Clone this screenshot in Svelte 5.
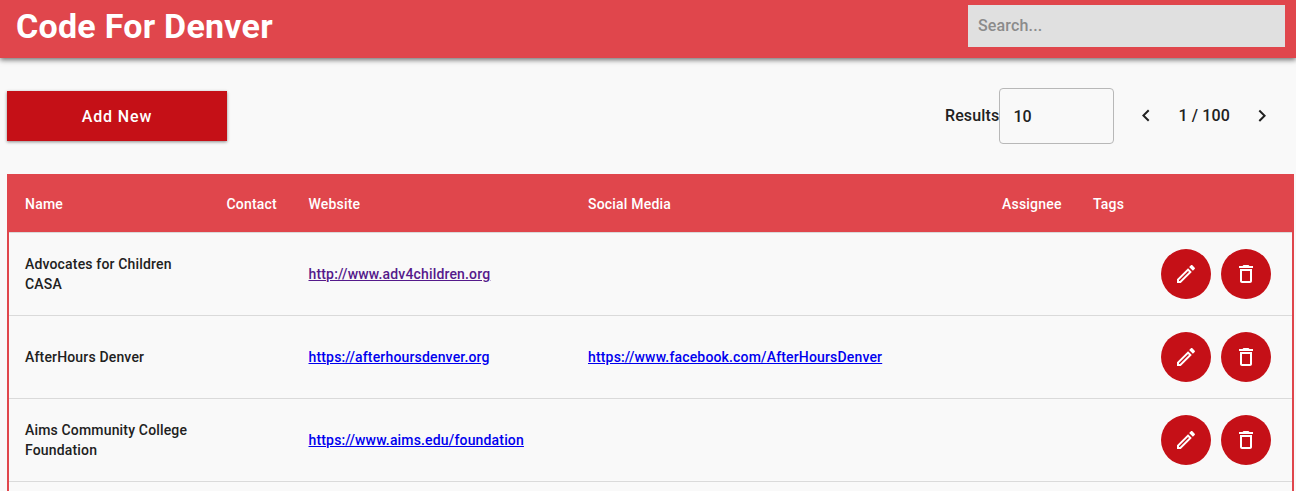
<script>
  const columns = ['Name', 'Contact', 'Website', 'Social Media', 'Assignee', 'Tags', ''];
  const rows = [
    { name: 'Advocates for Children CASA', website: 'http://www.adv4children.org', visited: true },
    { name: 'AfterHours Denver', website: 'https://afterhoursdenver.org', social: 'https://www.facebook.com/AfterHoursDenver' },
    { name: 'Aims Community College Foundation', website: 'https://www.aims.edu/foundation' },
    { name: '', website: '' },
  ];
</script>

<div class="page">
  <header>
    <h1>Code For Denver</h1>
    <input class="search" type="text" placeholder="Search..." aria-label="Search" />
  </header>

  <div class="toolbar">
    <button class="add">Add New</button>
    <div class="pager">
      <span class="label">Results</span>
      <div class="select">10</div>
      <button class="arrow prev" aria-label="Previous page">
        <svg viewBox="0 0 24 24"><path d="M15.41 16.09l-4.58-4.59 4.58-4.59L14 5.5l-6 6 6 6z" /></svg>
      </button>
      <span class="count">1 / 100</span>
      <button class="arrow next" aria-label="Next page">
        <svg viewBox="0 0 24 24"><path d="M8.59 16.34l4.58-4.59-4.58-4.59L10 5.75l6 6-6 6z" /></svg>
      </button>
    </div>
  </div>

  <div class="table">
    <div class="row head">
      {#each columns as column}
        <div class="cell">{column}</div>
      {/each}
    </div>
    {#each rows as row}
      <div class="row">
        <div class="cell">{row.name}</div>
        <div class="cell"></div>
        <div class="cell">
          {#if row.website}<a class:visited={row.visited} href={row.website}>{row.website}</a>{/if}
        </div>
        <div class="cell">
          {#if row.social}<a href={row.social}>{row.social}</a>{/if}
        </div>
        <div class="cell"></div>
        <div class="cell"></div>
        <div class="cell actions">
          <button class="round" aria-label="Edit">
            <svg viewBox="0 0 24 24"><path d="M14.06 9.02l.92.92L5.92 19H5v-.92l9.06-9.06M17.66 3c-.25 0-.51.1-.7.29l-1.83 1.83 3.75 3.75 1.83-1.83c.39-.39.39-1.02 0-1.41l-2.34-2.34c-.2-.2-.45-.29-.71-.29zm-3.6 3.19L3 17.25V21h3.75L17.81 9.94l-3.75-3.75z" /></svg>
          </button>
          <button class="round" aria-label="Delete">
            <svg viewBox="0 0 24 24"><path d="M6 19c0 1.1.9 2 2 2h8c1.1 0 2-.9 2-2V7H6v12zM8 9h8v10H8V9zm7.5-5l-1-1h-5l-1 1H5v2h14V4z" /></svg>
          </button>
        </div>
      </div>
    {/each}
  </div>
</div>

<style>
  :global(body) {
    margin: 0;
    background: #f9f9f9;
  }
  .page {
    height: 491px;
    overflow: hidden;
    background: #f9f9f9;
    color: #212121;
    font-family: Roboto, sans-serif;
    font-weight: 500;
    letter-spacing: 0.15px;
  }
  .page * {
    box-sizing: border-box;
  }
  button,
  input {
    border: 0;
    padding: 0;
    margin: 0;
    font: inherit;
    letter-spacing: inherit;
  }
  svg {
    display: block;
    width: 24px;
    height: 24px;
    fill: currentColor;
  }
  header {
    display: flex;
    justify-content: space-between;
    align-items: center;
    height: 58px;
    padding: 0 11px 6px 16px;
    background: #e0464c;
    box-shadow: 0 2px 5px rgba(0, 0, 0, 0.55);
  }
  h1 {
    margin: 0;
    color: #fff;
    font-size: 34px;
    line-height: 40px;
    font-weight: 700;
    letter-spacing: 0.25px;
  }
  .search {
    width: 317px;
    height: 42px;
    padding: 0 10px 2px;
    border-radius: 0;
    background: #e0e0e0;
    font-size: 16px;
  }
  .search::placeholder {
    color: #8b8b8b;
    opacity: 1;
  }
  .toolbar {
    display: flex;
    justify-content: space-between;
    align-items: center;
    height: 116px;
    padding: 0 22px 0 7px;
  }
  .add {
    width: 220px;
    height: 50px;
    background: #c51017;
    color: #fff;
    font-size: 16px;
    letter-spacing: 0.9px;
    box-shadow: 0 1px 3px rgba(0, 0, 0, 0.45);
  }
  .pager {
    display: flex;
    align-items: center;
    font-size: 16px;
  }
  .label,
  .count {
    padding-bottom: 2px;
  }
  .select {
    display: flex;
    align-items: center;
    width: 115px;
    height: 56px;
    padding: 1px 13px 0;
    border: 1px solid #b8b8b8;
    border-radius: 4px;
  }
  .arrow {
    background: none;
    color: #212121;
  }
  .prev {
    margin: 0 20px;
  }
  .next {
    margin-left: 20px;
  }
  .table {
    margin: 0 2px 0 7px;
    border: 2px solid #e0464c;
    font-size: 14px;
    line-height: 20px;
    letter-spacing: 0.165px;
  }
  .row {
    display: grid;
    grid-template-columns: 201.5px 82px 279.5px 414px 91px 63px 1fr;
    align-items: center;
    height: 83px;
    border-bottom: 1px solid #dadada;
  }
  .cell {
    padding: 0 16px;
  }
  .head {
    height: 57px;
    background: #e0464c;
    color: #fff;
    letter-spacing: 0.2px;
  }
  a {
    color: #0000ee;
  }
  a.visited {
    color: #551a8b;
  }
  .actions {
    display: flex;
    gap: 10px;
    padding: 0 21px;
  }
  .round {
    display: grid;
    place-items: center;
    width: 50px;
    height: 50px;
    flex: none;
    border-radius: 50%;
    background: #c51017;
    color: #fff;
  }
</style>
